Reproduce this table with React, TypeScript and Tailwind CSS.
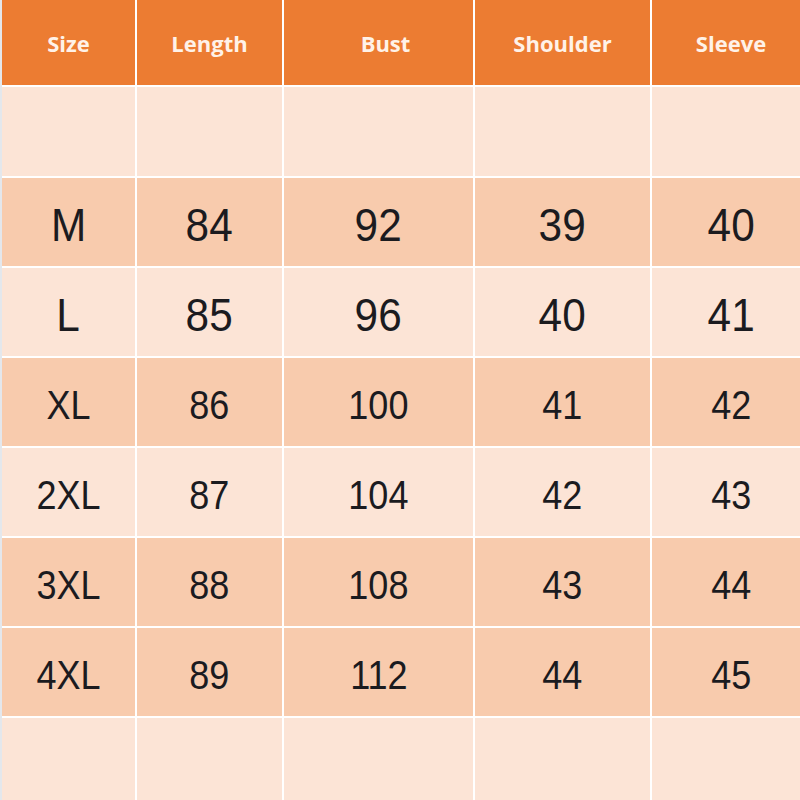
const headers = ['Size', 'Length', 'Bust', 'Shoulder', 'Sleeve'];

const rows: { cells: string[]; dark: boolean; big?: boolean }[] = [
  { cells: ['', '', '', '', ''], dark: false },
  { cells: ['M', '84', '92', '39', '40'], dark: true, big: true },
  { cells: ['L', '85', '96', '40', '41'], dark: false, big: true },
  { cells: ['XL', '86', '100', '41', '42'], dark: true },
  { cells: ['2XL', '87', '104', '42', '43'], dark: false },
  { cells: ['3XL', '88', '108', '43', '44'], dark: true },
  { cells: ['4XL', '89', '112', '44', '45'], dark: true },
  { cells: ['', '', '', '', ''], dark: false },
];

export default function App() {
  return (
    <div className="w-[800px] h-[800px] overflow-hidden bg-[#e4e7ec] pl-[2px]">
      <div className="grid w-[810px] grid-cols-[133px_145px_189px_175px_158px] grid-rows-[85px_89px_88px_88px_88px_88px_88px_88px_120px] gap-[2px] bg-white">
        {headers.map((h, i) => (
          <div
            key={h}
            className={`flex items-center justify-center bg-[#ec7c32] pt-[2px] text-[22px] font-bold text-[#fff2e8] ${i === 2 ? 'pl-[14px]' : ''}`}
            style={{ fontFamily: '"Open Sans", "Noto Sans", sans-serif' }}
          >
            {h}
          </div>
        ))}
        {rows.map((row, r) =>
          row.cells.map((c, i) => (
            <div
              key={`${r}-${i}`}
              className={`flex items-center justify-center pt-[5px] text-[#1b1b1f] ${row.dark ? 'bg-[#f8cbad]' : 'bg-[#fce4d6]'} ${row.big ? 'text-[47px]' : 'text-[40px]'}`}
              style={{ fontFamily: '"Liberation Sans", Arial, sans-serif' }}
            >
              <span className="inline-block scale-x-90 leading-none">{c}</span>
            </div>
          ))
        )}
      </div>
    </div>
  );
}
